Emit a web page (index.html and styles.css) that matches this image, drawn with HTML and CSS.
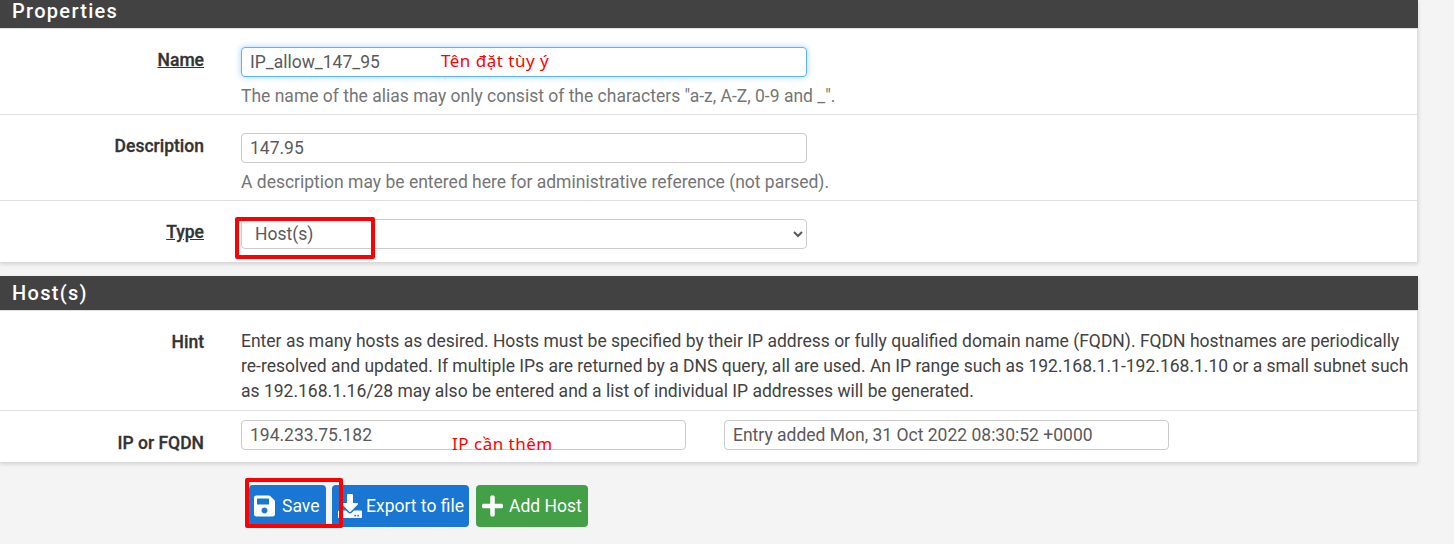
FILE: index.html
```html
<!DOCTYPE html>
<html lang="en">
<head>
    <meta charset="UTF-8">
    <meta name="viewport" content="width=device-width, initial-scale=1.0">
    <title>Firewall Aliases - Edit</title>
    <link rel="stylesheet" href="styles.css">
</head>
<body>
    <div class="container">
        <!-- Properties -->
        <div class="panel">
            <h2 class="panel-title panel-title-top">Properties</h2>
            <div class="row row-name">
                <label class="row-label required" for="name">Name</label>
                <div class="row-field">
                    <input class="field field-focus" type="text" id="name" value="IP_allow_147_95">
                    <p class="help">The name of the alias may only consist of the characters "a-z, A-Z, 0-9 and _".</p>
                </div>
            </div>
            <div class="row row-name">
                <label class="row-label" for="descr">Description</label>
                <div class="row-field">
                    <input class="field" type="text" id="descr" value="147.95">
                    <p class="help">A description may be entered here for administrative reference (not parsed).</p>
                </div>
            </div>
            <div class="row row-type">
                <label class="row-label required" for="type">Type</label>
                <div class="row-field">
                    <select class="field field-select" id="type">
                        <option>Host(s)</option>
                    </select>
                </div>
            </div>
        </div>

        <!-- Hosts -->
        <div class="panel panel-hosts">
            <h2 class="panel-title">Host(s)</h2>
            <div class="row row-hint">
                <div class="row-label">Hint</div>
                <div class="row-field hint-text">Enter as many hosts as desired. Hosts must be specified by their IP address or fully qualified domain name (FQDN). FQDN hostnames are periodically re-resolved and updated. If multiple IPs are returned by a DNS query, all are used. An IP range such as 192.168.1.1-192.168.1.10 or a small subnet such as 192.168.1.16/28 may also be entered and a list of individual IP addresses will be generated.</div>
            </div>
            <div class="row row-host">
                <label class="row-label label-low" for="host">IP or FQDN</label>
                <div class="row-field host-fields">
                    <input class="field field-host" type="text" id="host" value="194.233.75.182">
                    <input class="field field-host" type="text" value="Entry added Mon, 31 Oct 2022 08:30:52 +0000">
                </div>
            </div>
        </div>

        <!-- Buttons -->
        <div class="actions">
            <button class="btn btn-blue btn-save">
                <svg class="icon" width="21" height="24" viewBox="0 0 448 512"><path d="M433.941 129.941l-83.882-83.882A48 48 0 0 0 316.118 32H48C21.49 32 0 53.49 0 80v352c0 26.51 21.49 48 48 48h352c26.51 0 48-21.49 48-48V163.882a48 48 0 0 0-14.059-33.941zM224 416c-35.346 0-64-28.654-64-64 0-35.346 28.654-64 64-64s64 28.654 64 64c0 35.346-28.654 64-64 64zm96-304.52V212c0 6.627-5.373 12-12 12H76c-6.627 0-12-5.373-12-12V108c0-6.627 5.373-12 12-12h228.52c3.183 0 6.235 1.264 8.485 3.515l3.48 3.48A11.996 11.996 0 0 1 320 111.48z"/></svg>
                Save
            </button>
            <button class="btn btn-blue btn-export">
                <svg class="icon" width="24" height="24" viewBox="0 0 512 512"><path d="M216 0h80c13.3 0 24 10.7 24 24v168h87.7c17.8 0 26.7 21.5 14.1 34.1L269.7 378.3c-7.5 7.5-19.8 7.5-27.3 0L90.1 226.1c-12.6-12.6-3.7-34.1 14.1-34.1H192V24c0-13.3 10.7-24 24-24zm296 376v112c0 13.3-10.7 24-24 24H24c-13.3 0-24-10.7-24-24V376c0-13.3 10.7-24 24-24h146.7l49 49c20.1 20.1 52.5 20.1 72.6 0l49-49H488c13.3 0 24 10.7 24 24zm-124 88c0-11-9-20-20-20s-20 9-20 20 9 20 20 20 20-9 20-20zm64 0c0-11-9-20-20-20s-20 9-20 20 9 20 20 20 20-9 20-20z"/></svg>
                Export to file
            </button>
            <button class="btn btn-green">
                <svg class="icon" width="21" height="24" viewBox="0 0 448 512"><path d="M416 208H272V64c0-17.67-14.33-32-32-32h-32c-17.67 0-32 14.33-32 32v144H32c-17.67 0-32 14.33-32 32v32c0 17.67 14.33 32 32 32h144v144c0 17.67 14.33 32 32 32h32c17.67 0 32-14.33 32-32V304h144c17.67 0 32-14.33 32-32v-32c0-17.67-14.33-32-32-32z"/></svg>
                Add Host
            </button>
        </div>

        <!-- Annotations drawn on the screenshot -->
        <span class="note note-name">Tên đặt tùy ý</span>
        <span class="note note-ip">IP cần thêm</span>
        <div class="red-box red-box-type"></div>
        <div class="red-box red-box-save"></div>
    </div>
</body>
</html>
```

FILE: styles.css
```css
* {
    margin: 0;
    padding: 0;
    box-sizing: border-box;
}

body {
    font-family: 'Roboto', 'Liberation Sans', sans-serif;
    font-size: 17.5px;
    background-color: #f4f4f4;
    color: #424242;
    overflow: hidden;
}

.container {
    position: relative;
    height: 544px;
}

/* Panels */
.panel {
    width: 1418px;
    background-color: #fff;
    border-right: 1px solid #ddd;
    box-shadow: 0 2px 4px rgba(0, 0, 0, 0.15);
}

.panel-hosts {
    margin-top: 14px;
}

.panel-title {
    height: 35px;
    padding-left: 12px;
    background-color: #424242;
    border-bottom: 1px solid #e0e0e0;
    color: #fff;
    font-size: 20px;
    font-weight: 500;
    line-height: 34px;
    letter-spacing: 1.3px;
    margin-right: -1px;
}

.panel-title-top {
    height: 29px;
    line-height: 22px;
}

/* Rows */
.row {
    display: grid;
    grid-template-columns: 204px 1fr;
    column-gap: 37px;
    border-bottom: 1px solid #e0e0e0;
}

.row:last-child {
    border-bottom: none;
}

.row-name {
    height: 86px;
    padding-top: 18px;
}

.row-type {
    height: 61px;
    padding-top: 18px;
}

.row-hint {
    height: 100px;
    padding-top: 18px;
}

.row-host {
    height: 51px;
    padding-top: 9px;
}

.row-label {
    text-align: right;
    font-weight: 500;
    line-height: 24px;
    color: #333;
    -webkit-text-stroke: 0.3px #333;
    padding-top: 1px;
}

.required {
    text-decoration: underline;
}

.label-low {
    padding-top: 11px;
}

.field {
    display: block;
    width: 566px;
    height: 30px;
    padding: 0 8px;
    border: 1px solid #ccc;
    border-radius: 4px;
    background-color: #fff;
    color: #5a5a5a;
    font-family: inherit;
    font-size: 17.5px;
}

.field-focus {
    border-color: #5cb3fd;
    box-shadow: 0 0 6px rgba(92, 179, 253, 0.6);
    outline: none;
}

.field-select {
    padding-left: 9px;
}

.help {
    margin-top: 7px;
    line-height: 24px;
    color: #757575;
}

.hint-text {
    line-height: 25px;
    padding-right: 8px;
}

.host-fields {
    display: flex;
    gap: 38px;
}

.field-host {
    width: 445px;
}

/* Buttons */
.actions {
    display: flex;
    gap: 7px;
    margin-top: 23px;
    padding-left: 249px;
}

.btn {
    display: flex;
    align-items: center;
    gap: 6px;
    height: 42px;
    border: none;
    border-radius: 4px;
    color: #fff;
    font-family: inherit;
    font-size: 17.5px;
}

.btn-blue {
    background-color: #1976d2;
}

.btn-green {
    background-color: #43a047;
    padding: 0 6px;
    width: 112px;
}

.btn-save {
    width: 77px;
    padding-left: 5px;
    gap: 7px;
}

.btn-export {
    width: 137px;
    padding-left: 6px;
    gap: 4px;
    margin-left: -1px;
}

.icon {
    fill: #fff;
    flex-shrink: 0;
}

/* Annotations */
.note {
    position: absolute;
    color: #ff0000;
    font-family: 'Noto Sans', sans-serif;
    font-size: 17px;
    letter-spacing: 0.5px;
    white-space: nowrap;
}

.note-name {
    left: 441px;
    top: 49px;
}

.note-ip {
    left: 452px;
    top: 432px;
}

.red-box {
    position: absolute;
    border: 4px solid #ff0000;
    border-radius: 2px;
}

.red-box-type {
    left: 235px;
    top: 217px;
    width: 140px;
    height: 42px;
}

.red-box-save {
    left: 245px;
    top: 478px;
    width: 98px;
    height: 50px;
}
```
